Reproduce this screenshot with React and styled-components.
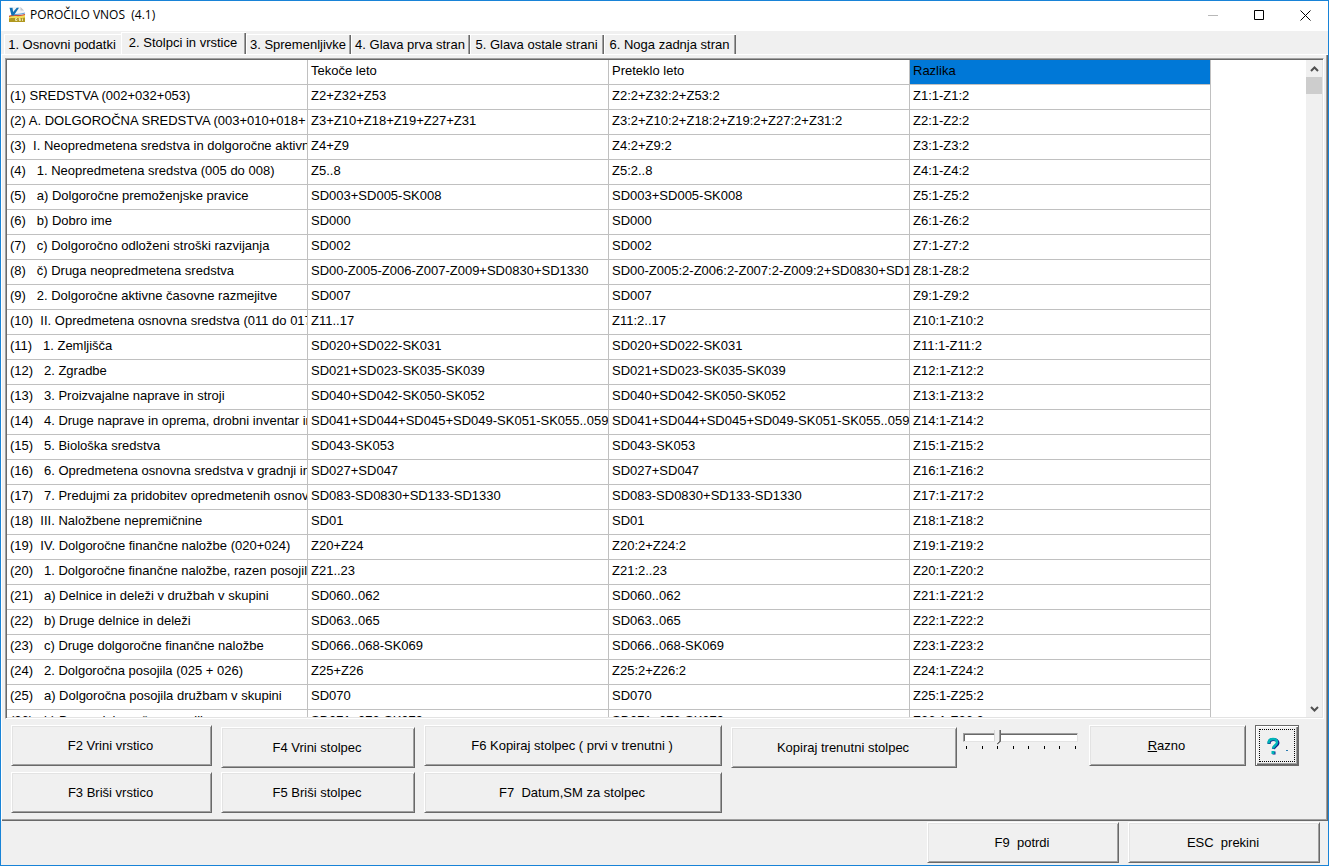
import { useState } from "react";
import { createGlobalStyle, styled } from "styled-components";

const tabs = [
  { label: "1. Osnovni podatki", width: 117 },
  { label: "2. Stolpci in vrstice", width: 125 },
  { label: "3. Spremenljivke", width: 105 },
  { label: "4. Glava prva stran", width: 119 },
  { label: "5. Glava ostale strani", width: 134 },
  { label: "6. Noga zadnja stran", width: 132 },
];

const columns = ["", "Tekoče leto", "Preteklo leto", "Razlika"];

const rows = [
  ["(1) SREDSTVA (002+032+053)", "Z2+Z32+Z53", "Z2:2+Z32:2+Z53:2"],
  ["(2) A. DOLGOROČNA SREDSTVA (003+010+018+", "Z3+Z10+Z18+Z19+Z27+Z31", "Z3:2+Z10:2+Z18:2+Z19:2+Z27:2+Z31:2"],
  ["(3)  I. Neopredmetena sredstva in dolgoročne aktivne", "Z4+Z9", "Z4:2+Z9:2"],
  ["(4)   1. Neopredmetena sredstva (005 do 008)", "Z5..8", "Z5:2..8"],
  ["(5)   a) Dolgoročne premoženjske pravice", "SD003+SD005-SK008", "SD003+SD005-SK008"],
  ["(6)   b) Dobro ime", "SD000", "SD000"],
  ["(7)   c) Dolgoročno odloženi stroški razvijanja", "SD002", "SD002"],
  ["(8)   č) Druga neopredmetena sredstva", "SD00-Z005-Z006-Z007-Z009+SD0830+SD1330", "SD00-Z005:2-Z006:2-Z007:2-Z009:2+SD0830+SD13"],
  ["(9)   2. Dolgoročne aktivne časovne razmejitve", "SD007", "SD007"],
  ["(10)  II. Opredmetena osnovna sredstva (011 do 017", "Z11..17", "Z11:2..17"],
  ["(11)   1. Zemljišča", "SD020+SD022-SK031", "SD020+SD022-SK031"],
  ["(12)   2. Zgradbe", "SD021+SD023-SK035-SK039", "SD021+SD023-SK035-SK039"],
  ["(13)   3. Proizvajalne naprave in stroji", "SD040+SD042-SK050-SK052", "SD040+SD042-SK050-SK052"],
  ["(14)   4. Druge naprave in oprema, drobni inventar in", "SD041+SD044+SD045+SD049-SK051-SK055..059", "SD041+SD044+SD045+SD049-SK051-SK055..059"],
  ["(15)   5. Biološka sredstva", "SD043-SK053", "SD043-SK053"],
  ["(16)   6. Opredmetena osnovna sredstva v gradnji in", "SD027+SD047", "SD027+SD047"],
  ["(17)   7. Predujmi za pridobitev opredmetenih osnovn", "SD083-SD0830+SD133-SD1330", "SD083-SD0830+SD133-SD1330"],
  ["(18)  III. Naložbene nepremičnine", "SD01", "SD01"],
  ["(19)  IV. Dolgoročne finančne naložbe (020+024)", "Z20+Z24", "Z20:2+Z24:2"],
  ["(20)   1. Dolgoročne finančne naložbe, razen posojil", "Z21..23", "Z21:2..23"],
  ["(21)   a) Delnice in deleži v družbah v skupini", "SD060..062", "SD060..062"],
  ["(22)   b) Druge delnice in deleži", "SD063..065", "SD063..065"],
  ["(23)   c) Druge dolgoročne finančne naložbe", "SD066..068-SK069", "SD066..068-SK069"],
  ["(24)   2. Dolgoročna posojila (025 + 026)", "Z25+Z26", "Z25:2+Z26:2"],
  ["(25)   a) Dolgoročna posojila družbam v skupini", "SD070", "SD070"],
  ["(26)   b) Druga dolgoročna posojila", "SD071..073-SK079", "SD071..073-SK079"],
];

function App() {
  const [activeTab, setActiveTab] = useState(1);
  const [column, setColumn] = useState(2);

  return (
    <Window>
      <GlobalStyle />
      <TitleBar>
        <AppIcon />
        <Title>POROČILO VNOS&nbsp; (4.1)</Title>
        <CaptionButton aria-label="Minimize" disabled>
          <svg width="11" height="11" viewBox="0 0 11 11">
            <path d="M0 5.5h10" stroke="#b8b8b8" fill="none" />
          </svg>
        </CaptionButton>
        <CaptionButton aria-label="Maximize">
          <svg width="11" height="11" viewBox="0 0 11 11">
            <path d="M.5 .5h9v9h-9z" stroke="#000" fill="none" />
          </svg>
        </CaptionButton>
        <CaptionButton aria-label="Close">
          <svg width="11" height="11" viewBox="0 0 11 11">
            <path d="M.5 .5l10 10M10.5 .5l-10 10" stroke="#000" fill="none" />
          </svg>
        </CaptionButton>
      </TitleBar>

      <TabBar role="tablist">
        {tabs.map((tab, i) => (
          <Tab
            key={tab.label}
            role="tab"
            aria-selected={i === activeTab}
            $active={i === activeTab}
            $beforeActive={i === activeTab - 1}
            $width={tab.width}
            onClick={() => setActiveTab(i)}
          >
            {tab.label}
          </Tab>
        ))}
      </TabBar>

      <Page>
        <GridFrame>
          <GridBody>
            <Table>
              <thead>
                <tr>
                  {columns.map((name, i) => (
                    <HeadCell key={i} scope="col" $selected={i === 3}>
                      {name}
                    </HeadCell>
                  ))}
                </tr>
              </thead>
              <tbody>
                {rows.map((row, i) => (
                  <tr key={i}>
                    {row.map((cell, j) => (
                      <Cell key={j}>{cell}</Cell>
                    ))}
                    <Cell>{`Z${i + 1}:1-Z${i + 1}:2`}</Cell>
                  </tr>
                ))}
              </tbody>
            </Table>
          </GridBody>
          <ScrollBar>
            <ScrollButton aria-label="Scroll up">
              <svg width="9" height="6" viewBox="0 0 9 6">
                <path d="M1 5l3.5-3.5L8 5" stroke="#505050" strokeWidth="2" fill="none" />
              </svg>
            </ScrollButton>
            <ScrollTrack>
              <ScrollThumb />
            </ScrollTrack>
            <ScrollButton aria-label="Scroll down">
              <svg width="9" height="6" viewBox="0 0 9 6">
                <path d="M1 1l3.5 3.5L8 1" stroke="#505050" strokeWidth="2" fill="none" />
              </svg>
            </ScrollButton>
          </ScrollBar>
        </GridFrame>

        <Actions>
          <Button>F2 Vrini vrstico</Button>
          <Button $low>F4 Vrini stolpec</Button>
          <Button>F6 Kopiraj stolpec ( prvi v trenutni )</Button>
          <Button $low>Kopiraj trenutni stolpec</Button>
          <SliderBox>
            <Slider
              type="range"
              aria-label="Stolpec"
              min="0"
              max="7"
              value={column}
              onChange={(e) => setColumn(Number(e.target.value))}
            />
            <Ticks>
              {[0, 1, 2, 3, 4, 5, 6, 7].map((n) => (
                <i key={n} />
              ))}
            </Ticks>
          </SliderBox>
          <Button>
            <u>R</u>azno
          </Button>
          <HelpButton aria-label="Pomoč">
            <HelpIcon />
          </HelpButton>
          <Button>F3 Briši vrstico</Button>
          <Button>F5 Briši stolpec</Button>
          <Button>F7&nbsp; Datum,SM za stolpec</Button>
        </Actions>
      </Page>

      <Footer>
        <Button>F9&nbsp; potrdi</Button>
        <Button>ESC&nbsp; prekini</Button>
      </Footer>
    </Window>
  );
}

function AppIcon() {
  return (
    <svg width="17" height="16" viewBox="0 0 17 16" aria-hidden="true">
      <path d="M3 0h8.500l3.500 3.500V12H3z" fill="#f1f3f5" />
      <path d="M11.500 0v3.500H15z" fill="#c3cad1" />
      <path d="M0 9.500c5-3 9 1 16-2v3.500L0 13z" fill="#f3dc55" />
      <path d="M0 11.500c5-1.500 10 .5 16-1V15H0z" fill="#b0981f" />
      <path d="M0 9.500c5-2.500 9 .5 16-2" stroke="#cf4a34" strokeWidth="1.200" fill="none" />
      <path d="M4 8c4-1 8-.5 12-2" stroke="#5b9bd5" fill="none" />
      <path d="M.5 .8h3l.6 4.200L7.800 .8H10L4.800 8.500H2.500z" fill="#1272b6" />
      <path
        d="M8 11.500H6.500v2H8v-1M11.500 11.500H10v1h1.500v1H10M13.500 14v-2.500"
        stroke="#f5efc8"
        strokeWidth=".8"
        fill="none"
      />
    </svg>
  );
}

function HelpIcon() {
  return (
    <svg width="24" height="20" viewBox="0 0 24 20" aria-hidden="true">
      <path
        d="M4 8c0-3 2-4.500 4.500-4.500S13 5 13 7c0 2.500-4 3-4.500 6"
        stroke="#10208a"
        strokeWidth="3"
        fill="none"
      />
      <path
        d="M3.500 7.500c0-3 2-4.500 4.500-4.500s4 1.500 4 3.500c0 2.500-3.500 3-4 6"
        stroke="#00b4b8"
        strokeWidth="2.500"
        fill="none"
      />
      <path d="M7.500 15.500h3v3h-3z" fill="#10208a" />
      <path d="M6.500 15h3v3h-3z" fill="#00b4b8" />
      <path d="M21 14h2v1h-2z" fill="#2a7ab0" />
    </svg>
  );
}

export default App;

const GlobalStyle = createGlobalStyle`
  * {
    box-sizing: border-box;
  }
  body {
    margin: 0;
    background: #f0f0f0;
  }
  body,
  button {
    font-family: "Liberation Sans", Arial, sans-serif;
    font-size: 13px;
    line-height: 16px;
    color: #000;
  }
`;

const Window = styled.div`
  display: flex;
  flex-direction: column;
  height: 100vh;
  border: 1px solid #1883d7;
  background: #f0f0f0;
`;

const TitleBar = styled.header`
  display: flex;
  align-items: center;
  flex: none;
  height: 30px;
  padding: 0 0 2px 8px;
  background: #fff;
`;

const Title = styled.h1`
  flex: 1;
  margin: 0 0 0 4px;
  font: 400 12px/16px "Open Sans", "Noto Sans", sans-serif;
`;

const CaptionButton = styled.button`
  display: flex;
  align-items: center;
  justify-content: center;
  width: 46px;
  height: 28px;
  padding: 0;
  border: none;
  background: none;
`;

const TabBar = styled.div`
  display: flex;
  align-items: flex-end;
  flex: none;
  height: 23px;
  padding-left: 3px;
`;

const Tab = styled.button`
  width: ${(p) => p.$width}px;
  height: ${(p) => (p.$active ? 22 : 20)}px;
  padding: 0 2px ${(p) => (p.$active ? 2 : 0)}px 0;
  border: 1px solid #fff;
  border-width: 1px 0 0 1px;
  background: #f0f0f0;
  box-shadow: ${(p) =>
    p.$beforeActive ? "none" : "inset -1px 0 #696969, inset -2px 0 #a0a0a0"};
  white-space: nowrap;
`;

const Page = styled.main`
  display: flex;
  flex-direction: column;
  flex: 1;
  min-height: 0;
  padding: 3px 2px 0 3px;
  border-top: 1px solid #fff;
  border-left: 1px solid #fff;
  box-shadow: inset -1px -1px #696969, inset -2px -2px #a0a0a0;
`;

const GridFrame = styled.div`
  display: flex;
  flex: 1;
  min-height: 0;
  margin-right: 2px;
  border: 1px solid #a0a0a0;
  border-right-color: #fff;
  border-bottom-color: #fff;
  box-shadow: inset 1px 1px #696969, inset -1px -1px #e3e3e3;
  padding: 1px;
  background: #fff;
`;

const GridBody = styled.div`
  flex: 1;
  min-width: 0;
  overflow: hidden;
`;

const Table = styled.table`
  width: 1204px;
  table-layout: fixed;
  border-spacing: 0;
`;

const Cell = styled.td`
  height: 25px;
  padding: 0 0 2px 3px;
  border: 1px solid #c0c0c0;
  border-width: 0 1px 1px 0;
  overflow: hidden;
  white-space: pre;
  text-align: left;
  font-weight: 400;
`;

const HeadCell = styled(Cell).attrs({ as: "th" })`
  background: ${(p) => (p.$selected ? "#0078d7" : "#fff")};
`;

const ScrollBar = styled.div`
  display: flex;
  flex-direction: column;
  width: 16px;
  background: #f0f0f0;
`;

const ScrollButton = styled.button`
  display: flex;
  align-items: center;
  justify-content: center;
  flex: none;
  height: 17px;
  padding: 0;
  border: none;
  background: none;
`;

const ScrollTrack = styled.div`
  flex: 1;
`;

const ScrollThumb = styled.div`
  height: 17px;
  background: #cdcdcd;
`;

const Actions = styled.div`
  display: grid;
  grid-template-columns: 201px 194px 298px 226px 114px 157px 44px;
  grid-template-rows: 43px 41px;
  gap: 4px 9px;
  flex: none;
  padding: 6px 0 8px 6px;
`;

const Button = styled.button`
  align-self: ${(p) => (p.$low ? "end" : "start")};
  height: 41px;
  padding: 0 6px 0 4px;
  border: 1px solid;
  border-color: #fff #696969 #696969 #fff;
  background: #f0f0f0;
  box-shadow: inset 1px 1px #e3e3e3, inset -1px -1px #a0a0a0;
`;

const HelpButton = styled(Button)`
  display: flex;
  align-items: center;
  justify-content: center;
  padding: 0;
  border-color: #696969;
  box-shadow: inset 1px 1px #fff, inset -1px -1px #696969, inset -2px -2px #a0a0a0;
  outline: 1px dotted #000;
  outline-offset: -5px;
`;

const SliderBox = styled.div`
  width: 115px;
  margin-left: -3px;
  padding-top: 4px;
`;

const Slider = styled.input`
  display: block;
  width: 100%;
  height: 16px;
  margin: 0;
  appearance: none;
  background: none;

  &::-webkit-slider-runnable-track {
    height: 9px;
    border: 1px solid #a0a0a0;
    border-color: #a0a0a0 #e3e3e3 #e3e3e3 #a0a0a0;
    background: #fff;
    box-shadow: inset 1px 1px #696969;
  }

  &::-webkit-slider-thumb {
    appearance: none;
    width: 7px;
    height: 15px;
    margin-top: -4px;
    background:
      linear-gradient(135deg, transparent 30%, #696969 30%) right bottom / 4px 4px no-repeat,
      linear-gradient(#696969, #696969) right top / 1px 100% no-repeat,
      linear-gradient(#a0a0a0, #a0a0a0) 5px 0 / 1px 100% no-repeat,
      linear-gradient(#d0d0d0, #d0d0d0) left top / 1px 100% no-repeat,
      #f0f0f0;
    clip-path: polygon(0 0, 100% 0, 100% 75%, 50% 100%, 0 75%);
  }
`;

const Ticks = styled.div`
  display: flex;
  justify-content: space-between;
  padding: 1px 2px 0 3px;

  i {
    width: 1px;
    height: 3px;
    background: #000;
  }
`;

const Footer = styled.footer`
  display: grid;
  grid-template-columns: 192px 192px;
  justify-content: end;
  gap: 9px;
  flex: none;
  padding: 1px 8px 2px;
`;
